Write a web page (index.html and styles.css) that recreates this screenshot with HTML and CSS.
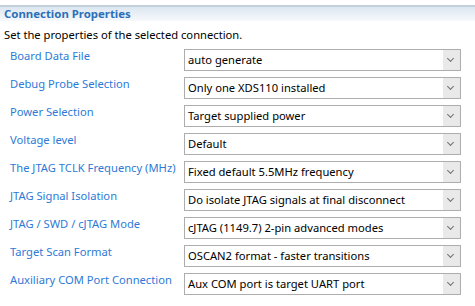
FILE: index.html
```html
<!DOCTYPE html>
<html>
<head>
    <meta charset="utf-8">
    <link rel="stylesheet" href="styles.css">
</head>
<body>
    <div class="panel">
        <div class="section_title">Connection Properties</div>
        <div class="section_desc">Set the properties of the selected connection.</div>

        <div class="props">
            <div class="prop_label">Board Data File</div>
            <div class="combo"><span class="combo_text">auto generate</span><span class="combo_btn"></span></div>

            <div class="prop_label">Debug Probe Selection</div>
            <div class="combo"><span class="combo_text">Only one XDS110 installed</span><span class="combo_btn"></span></div>

            <div class="prop_label">Power Selection</div>
            <div class="combo"><span class="combo_text">Target supplied power</span><span class="combo_btn"></span></div>

            <div class="prop_label">Voltage level</div>
            <div class="combo"><span class="combo_text">Default</span><span class="combo_btn"></span></div>

            <div class="prop_label">The JTAG TCLK Frequency (MHz)</div>
            <div class="combo"><span class="combo_text">Fixed default 5.5MHz frequency</span><span class="combo_btn"></span></div>

            <div class="prop_label">JTAG Signal Isolation</div>
            <div class="combo"><span class="combo_text">Do isolate JTAG signals at final disconnect</span><span class="combo_btn"></span></div>

            <div class="prop_label">JTAG / SWD / cJTAG Mode</div>
            <div class="combo"><span class="combo_text">cJTAG (1149.7) 2-pin advanced modes</span><span class="combo_btn"></span></div>

            <div class="prop_label">Target Scan Format</div>
            <div class="combo"><span class="combo_text">OSCAN2 format - faster transitions</span><span class="combo_btn"></span></div>

            <div class="prop_label">Auxiliary COM Port Connection</div>
            <div class="combo"><span class="combo_text">Aux COM port is target UART port</span><span class="combo_btn"></span></div>
        </div>
    </div>
</body>
</html>
```

FILE: styles.css
```css
* {
    margin: 0;
    padding: 0;
    box-sizing: border-box;
}

body {
    background: #ffffff;
    font-family: "Noto Sans", "Open Sans", sans-serif;
    font-size: 11.2px;
    color: #000000;
}

.panel {
    padding-top: 5px;
}

.section_title {
    height: 16px;
    border-top: 2px solid #c3d1df;
    background: linear-gradient(to bottom, #dce6f0, #f6f9fc);
    color: #2c6fb9;
    font-weight: bold;
    font-size: 11.4px;
    line-height: 13px;
    padding-left: 4px;
}

.section_desc {
    padding-left: 4px;
    line-height: 16px;
    margin-top: 6px;
}

.props {
    display: grid;
    grid-template-columns: 184px 277px;
    row-gap: 6px;
    margin-top: 6px;
}

.prop_label {
    color: #2d7ad6;
    padding-left: 10px;
    line-height: 16px;
    margin-top: -1px;
    white-space: nowrap;
}

.combo {
    height: 22px;
    border: 1px solid #adadad;
    display: flex;
    background: #ffffff;
}

.combo_text {
    flex: 1;
    padding-left: 3px;
    line-height: 20px;
    white-space: nowrap;
    overflow: hidden;
}

.combo_btn {
    width: 17px;
    background: #e9e9e9;
    position: relative;
}

.combo_btn::after {
    content: "";
    position: absolute;
    left: 5px;
    top: 6px;
    width: 4px;
    height: 4px;
    border-right: 1px solid #707070;
    border-bottom: 1px solid #707070;
    transform: rotate(45deg);
}
```
